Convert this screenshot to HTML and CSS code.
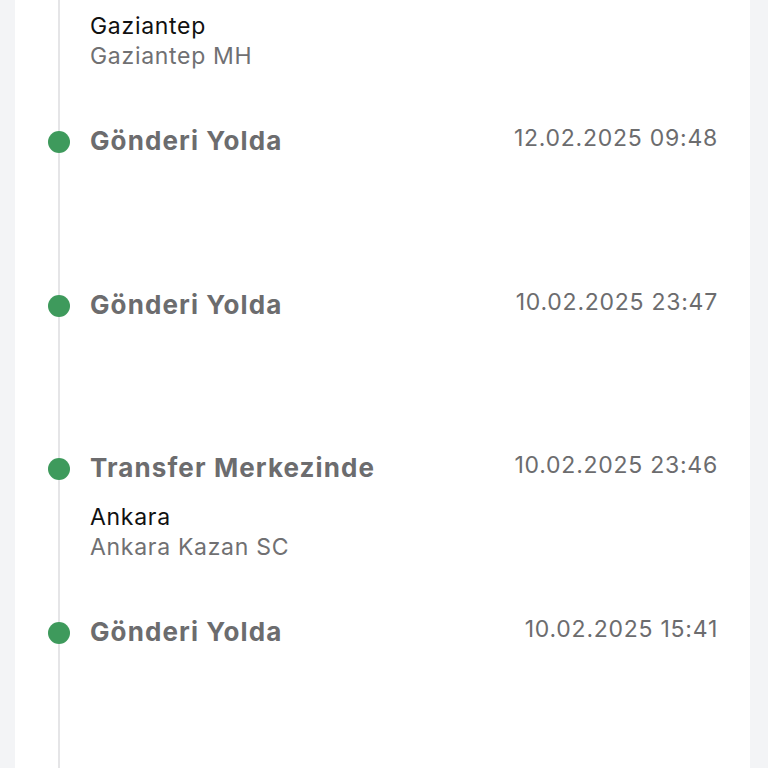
FILE: index.html
```html
<!DOCTYPE html>
<html>
<head>
    <meta charset="UTF-8">
    <title>Gönderi Hareketleri</title>
    <link rel="stylesheet" href="styles.css">
</head>
<body>
    <div class="card">
        <div class="timeline">
            <div class="item tail">
                <div class="place">
                    <p class="city">Gaziantep</p>
                    <p class="unit">Gaziantep MH</p>
                </div>
            </div>
            <div class="item">
                <div class="head">
                    <span class="status">Gönderi Yolda</span>
                    <span class="date">12.02.2025 09:48</span>
                </div>
            </div>
            <div class="item">
                <div class="head">
                    <span class="status">Gönderi Yolda</span>
                    <span class="date">10.02.2025 23:47</span>
                </div>
            </div>
            <div class="item">
                <div class="head">
                    <span class="status">Transfer Merkezinde</span>
                    <span class="date">10.02.2025 23:46</span>
                </div>
                <div class="place">
                    <p class="city">Ankara</p>
                    <p class="unit">Ankara Kazan SC</p>
                </div>
            </div>
            <div class="item">
                <div class="head">
                    <span class="status">Gönderi Yolda</span>
                    <span class="date">10.02.2025 15:41</span>
                </div>
            </div>
        </div>
    </div>
</body>
</html>
```

FILE: styles.css
```css
* {
    margin: 0;
    padding: 0;
    box-sizing: border-box;
}
body {
    background-color: #f3f4f6;
    font-family: Inter, "Noto Sans", sans-serif;
    height: 768px;
    overflow: hidden;
}
.card {
    margin-left: 15px;
    width: 735px;
    min-height: 768px;
    background-color: #fff;
    padding-right: 33px;
}
.timeline {
    margin-left: 43px;
    min-height: 768px;
    border-left: 2px solid #e5e5e7;
}
.timeline .item {
    position: relative;
    height: 163.5px;
    padding-left: 30px;
}
.timeline .item::before {
    content: "";
    position: absolute;
    left: -12px;
    top: 6px;
    width: 22px;
    height: 22px;
    border-radius: 50%;
    background-color: #3e9a5c;
}
.timeline .item.tail {
    height: 125px;
    padding-top: 11px;
}
.timeline .item.tail::before {
    display: none;
}
.item .head {
    display: flex;
    justify-content: space-between;
    align-items: flex-start;
}
.item .status {
    font-size: 26px;
    line-height: 32px;
    font-weight: 700;
    letter-spacing: 1.1px;
    color: #6c6c6e;
}
.item .date {
    font-size: 23px;
    line-height: 26px;
    letter-spacing: 0.75px;
    margin-right: -1px;
    color: #6c6c6e;
}
.item .head + .place {
    margin-top: 18px;
}
.place .city,
.place .unit {
    font-size: 23px;
    line-height: 30px;
    letter-spacing: 0.7px;
}
.place .city {
    color: #111;
}
.place .unit {
    color: #707072;
}
```
